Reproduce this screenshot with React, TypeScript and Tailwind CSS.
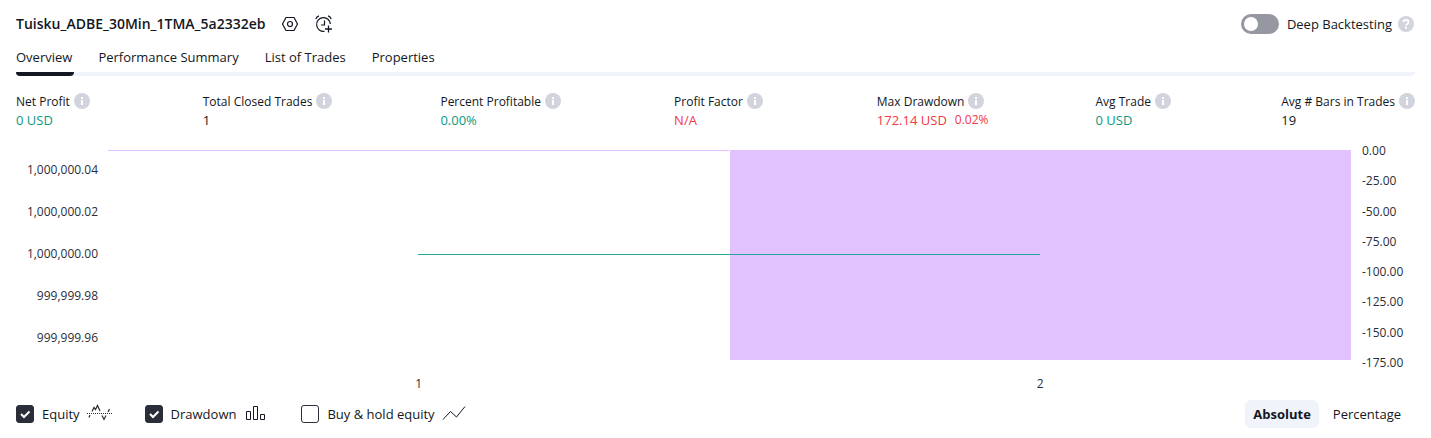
import { useState } from "react";

const TABS = ["Overview", "Performance Summary", "List of Trades", "Properties"];

type Stat = { label: string; value: string; extra?: string; tone: string };

const STATS: Stat[] = [
  { label: "Net Profit", value: "0 USD", tone: "text-[#089981]" },
  { label: "Total Closed Trades", value: "1", tone: "text-[#131722]" },
  { label: "Percent Profitable", value: "0.00%", tone: "text-[#089981]" },
  { label: "Profit Factor", value: "N/A", tone: "text-[#f23645]" },
  { label: "Max Drawdown", value: "172.14 USD", extra: "0.02%", tone: "text-[#f23645]" },
  { label: "Avg Trade", value: "0 USD", tone: "text-[#089981]" },
  { label: "Avg # Bars in Trades", value: "19", tone: "text-[#131722]" },
];

const EQUITY_TICKS = ["1,000,000.04", "1,000,000.02", "1,000,000.00", "999,999.98", "999,999.96"];
const DRAWDOWN_TICKS = ["0.00", "-25.00", "-50.00", "-75.00", "-100.00", "-125.00", "-150.00", "-175.00"];

function InfoIcon() {
  return (
    <svg className="size-4 shrink-0" viewBox="0 0 16 16" aria-hidden="true">
      <circle cx="8" cy="8" r="8" fill="#d1d4dc" />
      <path d="M7 4h2v2H7zM7 7h2v5H7z" fill="#fff" />
    </svg>
  );
}

function HelpIcon() {
  return (
    <svg className="size-4 shrink-0" viewBox="0 0 16 16" aria-hidden="true">
      <circle cx="8" cy="8" r="8" fill="#d1d4dc" />
      <path d="M5.500 6.300C5.500 4.700 6.600 4 8 4s2.500.8 2.500 2.200c0 1.700-2.500 1.700-2.500 3.500" fill="none" stroke="#fff" strokeWidth="1.800" />
      <path d="M7 10.800h2v2H7z" fill="#fff" />
    </svg>
  );
}

function SettingsIcon() {
  return (
    <svg className="h-4 w-[18px]" viewBox="0 0 18 16" fill="none" stroke="#131722" aria-hidden="true">
      <path d="M5 1.500h8l3.500 6.500-3.500 6.500H5L1.500 8z" strokeWidth="1.200" strokeLinejoin="round" />
      <circle cx="9" cy="8" r="2.500" strokeWidth="1.200" />
    </svg>
  );
}

function AlertIcon() {
  return (
    <svg className="size-[18px]" viewBox="0 0 18 18" fill="none" stroke="#131722" strokeWidth="1.200" aria-hidden="true">
      <path d="M15.400 9A6.900 6.900 0 1 0 9.500 16.300" />
      <path d="M.8 4C1.300 2.500 2.500 1.200 4 .8M16.200 4c-.5-1.500-1.700-2.800-3.200-3.200" />
      <path d="M9.500 5.500v4.500H6" />
      <path d="M13.500 10.500v7M10 14h7" strokeWidth="1.300" />
    </svg>
  );
}

function EquityIcon() {
  return (
    <svg className="h-5 w-7" viewBox="0 0 28 20" fill="none" stroke="#2a2e39" aria-hidden="true">
      <path d="M2 9.500h25" strokeDasharray="1 1" />
      <path d="M4 13.500l1-2.500M7 7.500 9 3.500l1.500 2L12.500 1.500l2.500 5.500M17 11.500l2 4 2-4M23 8l1.500-3" strokeWidth="1.200" />
    </svg>
  );
}

function BarsIcon() {
  return (
    <svg className="h-5 w-7" viewBox="0 0 28 20" fill="none" stroke="#131722" aria-hidden="true">
      <path d="M5.500 7.500h4v8h-4zM12.500 2.500h4v13h-4zM19.500 10.500h4v5h-4z" />
    </svg>
  );
}

function LineIcon() {
  return (
    <svg className="h-5 w-7" viewBox="0 0 28 20" fill="none" stroke="#131722" aria-hidden="true">
      <path d="M3 15.500l7.500-8 6 5.500L25 2.500" />
    </svg>
  );
}

function Tick() {
  return (
    <svg
      className="pointer-events-none absolute inset-0 hidden size-[18px] peer-checked:block"
      viewBox="0 0 18 18"
      fill="none"
      stroke="#fff"
      strokeWidth="2"
      aria-hidden="true"
    >
      <path d="M5 9l3 3 5.500-5.500" />
    </svg>
  );
}

type SeriesToggleProps = {
  label: string;
  checked: boolean;
  onChange: (value: boolean) => void;
  icon: React.ReactNode;
};

function SeriesToggle({ label, checked, onChange, icon }: SeriesToggleProps) {
  return (
    <label className="flex items-center">
      <span className="relative mr-2 size-[18px]">
        <input
          type="checkbox"
          checked={checked}
          onChange={(e) => onChange(e.target.checked)}
          className="peer block size-[18px] appearance-none rounded-[3px] border border-[#2a2e39] bg-white checked:bg-[#2a2e39]"
        />
        <Tick />
      </span>
      <span className="mr-[5px]">{label}</span>
      {icon}
    </label>
  );
}

function Chart({ equity, drawdown }: { equity: boolean; drawdown: boolean }) {
  return (
    <section className="flex text-xs leading-4 text-[#2a2e39]" aria-label="Equity chart">
      <ul className="w-[82px] pt-[7px] text-right">
        {EQUITY_TICKS.map((t) => (
          <li key={t} className="flex h-[42px] items-center justify-end">
            {t}
          </li>
        ))}
      </ul>
      <div className="ml-[10px] flex flex-1 flex-col pt-2">
        <svg className="block h-[210px] w-full" viewBox="0 0 1243 210" preserveAspectRatio="none" shapeRendering="crispEdges">
          {drawdown && (
            <g fill="#e1c2ff">
              <rect x="0" y="0" width="621" height="1" />
              <rect x="622" y="0" width="621" height="210" />
            </g>
          )}
          {equity && <rect x="310" y="104" width="622" height="1" fill="#26a69a" />}
        </svg>
        <div className="mt-4 grid grid-cols-2 text-center">
          <span>1</span>
          <span>2</span>
        </div>
      </div>
      <ul className="ml-[11px] flex h-[229px] w-[53px] flex-col justify-between pt-px">
        {DRAWDOWN_TICKS.map((t) => (
          <li key={t}>{t}</li>
        ))}
      </ul>
    </section>
  );
}

export default function App() {
  const [tab, setTab] = useState("Overview");
  const [deep, setDeep] = useState(false);
  const [equity, setEquity] = useState(true);
  const [drawdown, setDrawdown] = useState(true);
  const [hold, setHold] = useState(false);
  const [mode, setMode] = useState("Absolute");

  return (
    <main className="bg-white px-4 pt-2 pb-[10px] font-['Trebuchet_MS','Open_Sans',sans-serif] text-[13px] leading-5 text-[#131722]">
      <header className="flex h-8 items-center justify-between">
        <div className="flex items-center">
          <h1 className="text-sm font-semibold">Tuisku_ADBE_30Min_1TMA_5a2332eb</h1>
          <button type="button" aria-label="Settings" className="ml-4">
            <SettingsIcon />
          </button>
          <button type="button" aria-label="Add alert" className="ml-4">
            <AlertIcon />
          </button>
        </div>
        <div className="flex items-center gap-1.5 pr-px">
          <label className="flex items-center gap-2">
            <span className="relative h-5 w-[38px]">
              <input
                type="checkbox"
                role="switch"
                checked={deep}
                onChange={(e) => setDeep(e.target.checked)}
                className="peer block h-5 w-[38px] appearance-none rounded-full bg-[#9598a1] checked:bg-[#2a2e39]"
              />
              <span className="pointer-events-none absolute top-[3px] left-[3px] size-[14px] rounded-full bg-white peer-checked:left-[21px]" />
            </span>
            Deep Backtesting
          </label>
          <HelpIcon />
        </div>
      </header>

      <nav className="flex gap-6 rounded-sm border-b-4 border-[#f0f3fa]">
        {TABS.map((t) => (
          <button
            key={t}
            type="button"
            onClick={() => setTab(t)}
            className={
              t === tab
                ? "-mb-1 h-9 rounded-b-sm border-b-4 border-[#131722] pt-0.5 pr-0.5"
                : "-mb-1 h-9 border-b-4 border-transparent pt-0.5 pr-0.5"
            }
          >
            {t}
          </button>
        ))}
      </nav>

      <dl className="grid grid-cols-[187fr_238fr_234fr_203fr_219fr_186fr_auto] pt-4">
        {STATS.map((s) => (
          <div key={s.label}>
            <dt className="flex h-[18px] items-center gap-1 text-xs font-medium">
              <span className="pt-0.5">{s.label}</span>
              <InfoIcon />
            </dt>
            <dd className={`flex items-center gap-2 leading-5 ${s.tone}`}>
              {s.value}
              {s.extra && <span className="text-xs">{s.extra}</span>}
            </dd>
          </div>
        ))}
      </dl>

      <div className="pt-3 pb-2">
        <Chart equity={equity} drawdown={drawdown} />
      </div>

      <footer className="flex h-7 items-center justify-between">
        <div className="flex items-center gap-8">
          <SeriesToggle label="Equity" checked={equity} onChange={setEquity} icon={<EquityIcon />} />
          <SeriesToggle label="Drawdown" checked={drawdown} onChange={setDrawdown} icon={<BarsIcon />} />
          <SeriesToggle label="Buy & hold equity" checked={hold} onChange={setHold} icon={<LineIcon />} />
        </div>
        <div className="flex gap-1.5 pr-1.5">
          {["Absolute", "Percentage"].map((m) => (
            <button
              key={m}
              type="button"
              onClick={() => setMode(m)}
              className={m === mode ? "h-7 rounded-md bg-[#f0f3fa] px-2 font-bold" : "h-7 rounded-md px-2"}
            >
              {m}
            </button>
          ))}
        </div>
      </footer>
    </main>
  );
}
